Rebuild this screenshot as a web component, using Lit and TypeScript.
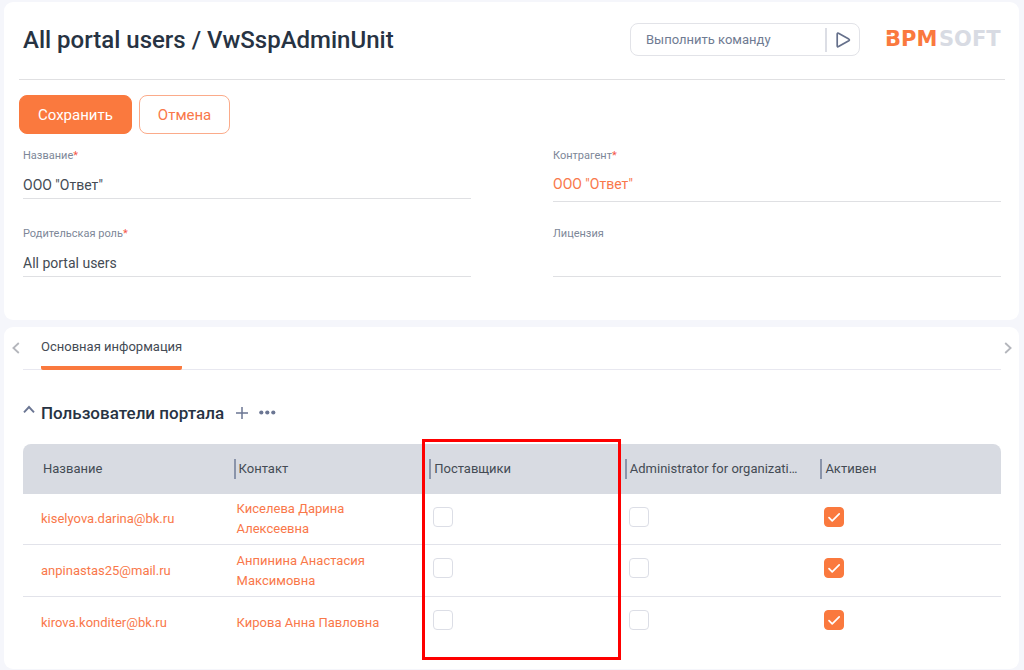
import { LitElement, html, css, nothing } from "lit";
import { customElement, state } from "lit/decorators.js";

interface PortalUser {
  login: string;
  contact: string;
  supplier: boolean;
  admin: boolean;
  active: boolean;
}

@customElement("app-root")
export class AppRoot extends LitElement {
  static styles = css`
    :host {
      display: flex;
      flex-direction: column;
      gap: 7px;
      box-sizing: border-box;
      min-height: 100vh;
      padding: 2px 5px 2px 4px;
      background: #f5f6fb;
      color: #444b54;
      font: 13px/20px Roboto, "Liberation Sans", sans-serif;
    }
    * {
      box-sizing: border-box;
    }
    a {
      color: #f9784a;
      text-decoration: none;
    }
    button,
    input {
      font: inherit;
      color: inherit;
    }
    button {
      padding: 0;
      border: 0;
      background: none;
      cursor: pointer;
    }
    svg {
      display: block;
    }
    .card {
      background: #fff;
      border-radius: 9px;
    }
    .summary {
      padding: 0 14px 43px 15px;
    }
    .header {
      display: flex;
      align-items: center;
      min-height: 78px;
      padding: 0 3px 2px 4px;
      border-bottom: 1px solid #e0e0e2;
    }
    .title {
      flex: 1;
      margin: 0;
      font-size: 24px;
      line-height: 32px;
      font-weight: 500;
      color: #273343;
    }
    .command {
      display: flex;
      align-items: center;
      width: 230px;
      height: 33px;
      margin-right: 26px;
      border: 1px solid #e2e3e8;
      border-radius: 8px;
    }
    .command-input {
      flex: 1;
      min-width: 0;
      padding: 0 0 0 15px;
      border: 0;
      outline: 0;
      background: none;
      color: #6f7b92;
    }
    .command-input::placeholder {
      color: #6f7b92;
      opacity: 1;
    }
    .run {
      display: flex;
      justify-content: center;
      width: 34px;
      padding: 3px 0;
      border-left: 2px solid #dcdee5;
    }
    .logo {
      font-family: "DejaVu Sans", sans-serif;
      font-size: 21px;
      font-weight: 700;
      fill: #d8dbe3;
    }
    .logo-accent {
      fill: #fa793e;
    }
    .actions {
      display: flex;
      gap: 7px;
      padding: 15px 0 13px;
    }
    .button {
      height: 39px;
      padding: 0 18px;
      border: 1px solid #fbab8a;
      border-radius: 8px;
      font-size: 15px;
      color: #f9784a;
    }
    .primary {
      border-color: #fa793e;
      background: #fa793e;
      color: #fff;
    }
    .fields {
      display: grid;
      grid-template-columns: 1fr 1fr;
      column-gap: 82px;
      row-gap: 23px;
      padding: 0 4px;
    }
    .label {
      display: block;
      font-size: 11px;
      line-height: 18px;
      color: #7d8798;
    }
    .required {
      color: #f5574a;
    }
    .value {
      display: block;
      width: 100%;
      height: 34px;
      padding: 10px 0 3px;
      border: 0;
      border-bottom: 1px solid #dfe0e3;
      border-radius: 0;
      outline: 0;
      background: none;
      font-size: 14px;
      line-height: 20px;
    }
    .lookup {
      height: 37px;
      padding-top: 9px;
    }
    .details {
      flex: 1;
      padding-bottom: 20px;
    }
    .tabs {
      display: flex;
      height: 43px;
      padding: 0 7px 0 8px;
    }
    .arrow {
      display: flex;
      align-items: center;
      width: 11px;
      height: 42px;
    }
    .arrow.next {
      justify-content: flex-end;
    }
    .tab-list {
      flex: 1;
      padding-left: 18px;
      border-bottom: 1px solid #e8e8f0;
    }
    .tab {
      height: 43px;
      border-bottom: 4px solid #fa793e;
      border-radius: 2px;
      color: #444b54;
    }
    .section {
      padding: 0 18px 0 19px;
    }
    .section-head {
      display: flex;
      align-items: center;
      height: 74px;
      padding-top: 11px;
    }
    .collapse {
      width: 18px;
      height: 26px;
      padding-bottom: 6px;
    }
    .section-title {
      margin: 0 12px 0 0;
      font-size: 17px;
      line-height: 24px;
      font-weight: 500;
      color: #273343;
    }
    .more {
      margin-left: 11px;
    }
    .grid {
      position: relative;
    }
    .users {
      width: 100%;
      table-layout: fixed;
      border-collapse: separate;
      border-spacing: 0;
    }
    .users th {
      height: 50px;
      padding: 0 0 0 15px;
      background: #d8dbe2;
      text-align: left;
      font-weight: 400;
    }
    .users th:first-child {
      border-top-left-radius: 8px;
    }
    .users th:last-child {
      border-top-right-radius: 8px;
    }
    .column {
      display: block;
      overflow: hidden;
      padding-left: 3px;
      border-left: 2px solid #8a94aa;
      text-overflow: ellipsis;
      white-space: nowrap;
    }
    .users th:first-child .column {
      border-color: transparent;
    }
    .users td {
      height: 52px;
      padding: 5px 16px 5px 18px;
      border-bottom: 1px solid #e2e3ea;
    }
    .users tr:first-child td {
      height: 51px;
    }
    .users tr:last-child td {
      border-bottom-color: transparent;
    }
    .users .flag {
      padding: 0 0 5px 19px;
    }
    .check {
      display: grid;
      width: 20px;
      height: 20px;
    }
    .check > * {
      grid-area: 1 / 1;
    }
    .box {
      appearance: none;
      width: 20px;
      height: 20px;
      margin: 0;
      border: 1px solid #dcdee6;
      border-radius: 4px;
      background: #fff;
    }
    .box:checked {
      border-color: #fa793e;
      background: #fa793e;
    }
    .tick {
      pointer-events: none;
      position: relative;
    }
    .highlight {
      position: absolute;
      top: -5px;
      bottom: -11px;
      left: calc(40% + 8px);
      width: calc(20% + 3px);
      border: 3px solid #fe0000;
      pointer-events: none;
    }
  `;

  @state() private users: PortalUser[] = [
    { login: "kiselyova.darina@bk.ru", contact: "Киселева Дарина Алексеевна", supplier: false, admin: false, active: true },
    { login: "anpinastas25@mail.ru", contact: "Анпинина Анастасия Максимовна", supplier: false, admin: false, active: true },
    { login: "kirova.konditer@bk.ru", contact: "Кирова Анна Павловна", supplier: false, admin: false, active: true },
  ];

  private columns = ["Название", "Контакт", "Поставщики", "Administrator for organizati…", "Активен"];

  private toggle(index: number, key: "supplier" | "admin" | "active") {
    this.users = this.users.map((u, i) => (i === index ? { ...u, [key]: !u[key] } : u));
  }

  private flag(user: PortalUser, index: number, key: "supplier" | "admin" | "active", name: string) {
    return html`<td class="flag">
      <label class="check">
        <input class="box" type="checkbox" aria-label=${name} .checked=${user[key]} @change=${() => this.toggle(index, key)} />
        ${user[key]
          ? html`<svg class="tick" width="20" height="20" viewBox="0 0 20 20" fill="none" stroke="#fff" stroke-width="1.7" stroke-linecap="round" stroke-linejoin="round">
              <path d="M5 10.7 8.2 13.9 15.2 6.8" />
            </svg>`
          : nothing}
      </label>
    </td>`;
  }

  render() {
    return html`
      <section class="card summary">
        <header class="header">
          <h1 class="title">All portal users / VwSspAdminUnit</h1>
          <div class="command">
            <input class="command-input" aria-label="Выполнить команду" placeholder="Выполнить команду" />
            <button class="run" aria-label="Выполнить">
              <svg width="18" height="18" viewBox="0 0 18 18" fill="none" stroke="#65708b" stroke-width="1.7" stroke-linejoin="round">
                <path d="M3.2 3.1Q3.2 1.6 4.5 2.3L14.8 8.1Q16 8.9 14.8 9.7L4.5 15.6Q3.2 16.3 3.2 14.8Z" />
              </svg>
            </button>
          </div>
          <svg class="logo" width="116" height="26" viewBox="0 0 116 26" role="img" aria-label="BPMSOFT">
            <text x="-1" y="19"><tspan class="logo-accent">BPM</tspan><tspan x="53">SOFT</tspan></text>
            <path d="M0 8.5h7" stroke="#fff" stroke-width="1.4" />
          </svg>
        </header>
        <div class="actions">
          <button class="button primary">Сохранить</button>
          <button class="button">Отмена</button>
        </div>
        <div class="fields">
          <div>
            <label class="label" for="name">Название<span class="required">*</span></label>
            <input class="value" id="name" value='ООО "Ответ"' />
          </div>
          <div>
            <span class="label" id="account">Контрагент<span class="required">*</span></span>
            <div class="value lookup"><a href="#account" aria-describedby="account">ООО "Ответ"</a></div>
          </div>
          <div>
            <label class="label" for="role">Родительская роль<span class="required">*</span></label>
            <input class="value" id="role" value="All portal users" />
          </div>
          <div>
            <label class="label" for="license">Лицензия</label>
            <input class="value" id="license" />
          </div>
        </div>
      </section>

      <section class="card details">
        <nav class="tabs">
          <button class="arrow" aria-label="Назад">
            <svg width="8" height="12" viewBox="0 0 8 12" fill="none" stroke="#b4b6bc" stroke-width="1.8"><path d="M6.8 1 1.4 6l5.4 5" /></svg>
          </button>
          <div class="tab-list"><button class="tab">Основная информация</button></div>
          <button class="arrow next" aria-label="Вперед">
            <svg width="8" height="12" viewBox="0 0 8 12" fill="none" stroke="#b4b6bc" stroke-width="1.8"><path d="M1.2 1 6.6 6l-5.4 5" /></svg>
          </button>
        </nav>
        <div class="section">
          <div class="section-head">
            <button class="collapse" aria-label="Свернуть">
              <svg width="12" height="9" viewBox="0 0 12 9" fill="none" stroke="#6b7693" stroke-width="1.9"><path d="M1 7.3 6 2l5 5.3" /></svg>
            </button>
            <h2 class="section-title">Пользователи портала</h2>
            <button aria-label="Добавить">
              <svg width="12" height="12" viewBox="0 0 12 12" stroke="#6b7693" stroke-width="1.5"><path d="M6 0v12M0 6h12" /></svg>
            </button>
            <button class="more" aria-label="Действия">
              <svg width="17" height="5" viewBox="0 0 17 5" fill="#6b7693"><circle cx="2.3" cy="2.5" r="2.1" /><circle cx="8.3" cy="2.5" r="2.1" /><circle cx="14.3" cy="2.5" r="2.1" /></svg>
            </button>
          </div>
          <div class="grid">
            <table class="users">
              <thead>
                <tr>${this.columns.map((c) => html`<th scope="col"><span class="column">${c}</span></th>`)}</tr>
              </thead>
              <tbody>
                ${this.users.map(
                  (u, i) => html`<tr>
                    <td><a href="#user">${u.login}</a></td>
                    <td><a href="#contact">${u.contact}</a></td>
                    ${this.flag(u, i, "supplier", "Поставщики")}
                    ${this.flag(u, i, "admin", "Administrator for organization")}
                    ${this.flag(u, i, "active", "Активен")}
                  </tr>`,
                )}
              </tbody>
            </table>
            <div class="highlight"></div>
          </div>
        </div>
      </section>
    `;
  }
}
